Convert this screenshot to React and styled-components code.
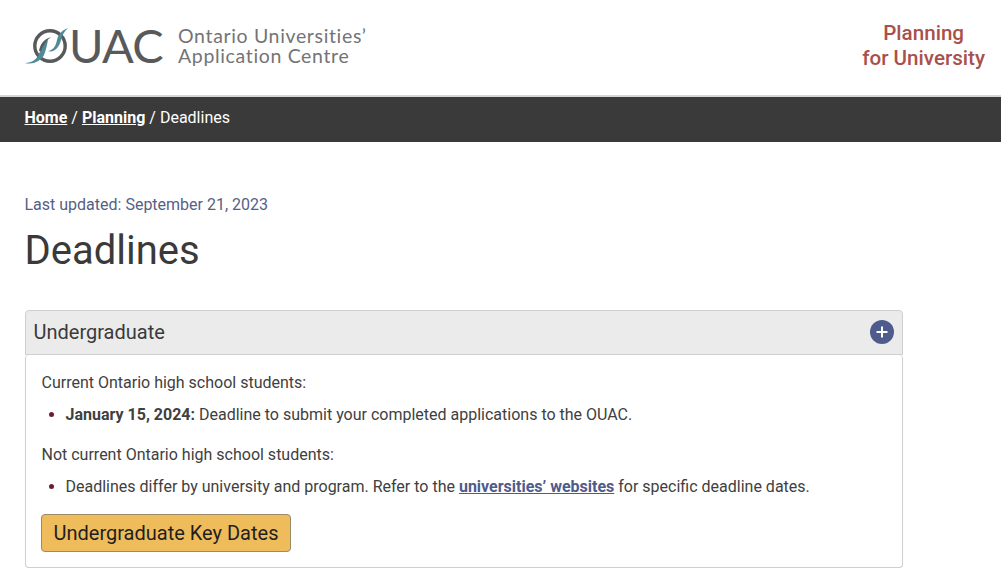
import styled, {createGlobalStyle} from "styled-components";

const c = {
    text: '#3a3a3a',
    body: '#404040',
    logo: '#58595b',
    teal: '#4f8a96',
    red: '#a9504c',
    navy: '#4f5b8c',
    slate: '#555f85',
    maroon: '#6b1f2e',
    border: '#cfcfcf',
};

const GlobalStyle = createGlobalStyle`
  html, body {
    margin: 0;
    padding: 0;
    background: #fff;
    overflow: hidden;
  }

  body {
    font-family: Roboto, "Liberation Sans", sans-serif;
    color: ${c.text};
  }
`;

const Header = styled.header`
  display: flex;
  align-items: flex-start;
  justify-content: space-between;
  height: 95px;
  box-sizing: border-box;
  padding: 22px 16px 0 24px;
`;

const Logo = styled.div`
  display: flex;
  align-items: center;
  height: 47px;
`;

const LogoMark = styled.div`
  display: flex;
  align-items: center;
  color: ${c.logo};
  font-family: Lato, sans-serif;
  font-size: 47px;
  font-weight: 400;
  letter-spacing: -0.7px;
  line-height: 47px;
`;

const LogoName = styled.div`
  margin-left: 15px;
  color: #737476;
  font-family: Lato, sans-serif;
  font-size: 19.5px;
  font-weight: 400;
  letter-spacing: 0.65px;
  line-height: 20px;
`;

const Section = styled.div`
  margin-top: -1px;
  color: ${c.red};
  font-size: 20.6px;
  font-weight: 500;
  line-height: 25px;
  text-align: center;
`;

const Breadcrumb = styled.nav`
  display: flex;
  align-items: center;
  gap: 4px;
  height: 47px;
  box-sizing: border-box;
  padding: 0 0 5px 24.5px;
  border-top: 2px solid #d6d6d6;
  background: ${c.text};
  color: #fff;
  font-size: 16px;
`;

const CrumbLink = styled.a`
  color: #fff;
  font-weight: 700;
  text-decoration: underline;
`;

const Main = styled.main`
  width: 878px;
  margin-left: 25px;
  padding-top: 53px;
`;

const Updated = styled.div`
  margin-left: -0.5px;
  color: ${c.slate};
  font-size: 16px;
  line-height: 20px;
`;

const Title = styled.h1`
  margin: 13px 0 0 -0.5px;
  color: ${c.text};
  font-size: 40px;
  font-weight: 400;
  line-height: 46px;
`;

const AccordionHead = styled.div`
  display: flex;
  align-items: center;
  justify-content: space-between;
  height: 45px;
  margin-top: 36px;
  box-sizing: border-box;
  padding: 0 8px 2px 7.5px;
  background: #ebebeb;
  border: 1px solid ${c.border};
  border-radius: 4px 4px 0 0;
  font-size: 20px;
`;

const PlusBadge = styled.span`
  display: flex;
  width: 24px;
  height: 24px;
  align-items: center;
  justify-content: center;
  border-radius: 50%;
  background: ${c.navy};
`;

const AccordionBody = styled.div`
  height: 213px;
  box-sizing: border-box;
  padding: 18px 16px 0 15.5px;
  border: 1px solid ${c.border};
  border-top: 0;
  border-radius: 4px;
  color: ${c.body};
  font-size: 16px;
  line-height: 20px;
`;

const Para = styled.p`
  margin: 0;
`;

const Bullets = styled.ul`
  margin: 12px 0 20px;
  padding-left: 24px;

  li::marker {
    color: ${c.maroon};
  }
`;

const BodyLink = styled.a`
  color: ${c.navy};
  font-weight: 700;
  text-decoration: underline;
`;

const KeyDates = styled.button`
  display: block;
  width: 250px;
  height: 38px;
  margin: -3px 0 0 -0.5px;
  box-sizing: border-box;
  padding: 0;
  background: #efbc5c;
  border: 1px solid #9a8a6a;
  border-radius: 4px;
  color: #1f1f1f;
  font-family: inherit;
  font-size: 20px;
`;

const RingSvg = styled.svg`
  flex: none;
  margin-right: 1px;
`;

function RingSwoosh() {
    return (
        <RingSvg width="44" height="38" viewBox="0 0 44 38">
            <circle cx="26" cy="19" r="15.2" fill="none" stroke={c.logo} strokeWidth="3.4"/>
            <path d="M1 36 C8 36 13 32 15 27 C17 22 19 16 24 13 C23 18 22 23 20 28 C17 34 9 38 1 36 Z" fill={c.teal}/>
            <path d="M15 24 C16 17 20 12 27 10 C23 13 19 18 17 24 Z" fill={c.logo}/>
            <path d="M24 24 C30 23 32 18 33 13 C34 8 38 3 44 1 C40 5 38 8 37 13 C35 21 30 26 24 24 Z" fill={c.teal}/>
        </RingSvg>
    );
}

function App() {
    return (
        <>
            <GlobalStyle/>
            <Header>
                <Logo>
                    <LogoMark>
                        <RingSwoosh/>
                        UAC
                    </LogoMark>
                    <LogoName>
                        Ontario Universities’<br/>
                        Application Centre
                    </LogoName>
                </Logo>
                <Section>
                    Planning<br/>
                    for University
                </Section>
            </Header>

            <Breadcrumb>
                <CrumbLink>Home</CrumbLink> / <CrumbLink>Planning</CrumbLink> / Deadlines
            </Breadcrumb>

            <Main>
                <Updated>Last updated: September 21, 2023</Updated>
                <Title>Deadlines</Title>

                <AccordionHead>
                    Undergraduate
                    <PlusBadge>
                        <svg width="14" height="14" viewBox="0 0 14 14">
                            <path d="M7 1.5v11M1.5 7h11" stroke="#fff" strokeWidth="2"/>
                        </svg>
                    </PlusBadge>
                </AccordionHead>
                <AccordionBody>
                    <Para>Current Ontario high school students:</Para>
                    <Bullets>
                        <li><b>January 15, 2024:</b> Deadline to submit your completed applications to the OUAC.</li>
                    </Bullets>
                    <Para>Not current Ontario high school students:</Para>
                    <Bullets>
                        <li>Deadlines differ by university and program. Refer to the <BodyLink>universities’ websites</BodyLink> for specific deadline dates.</li>
                    </Bullets>
                    <KeyDates>Undergraduate Key Dates</KeyDates>
                </AccordionBody>
            </Main>
        </>
    );
}

export default App;
